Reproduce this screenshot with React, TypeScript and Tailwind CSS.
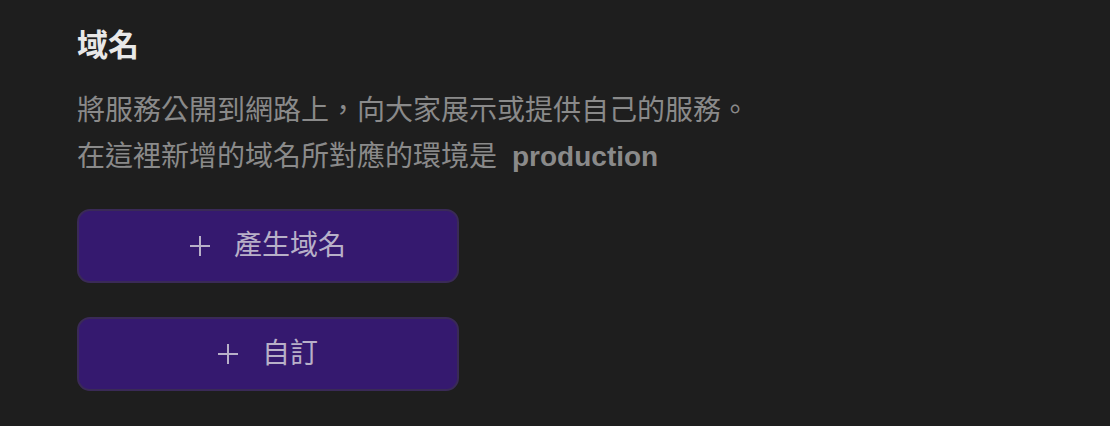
import React from "react";

const Plus = () => (
  <svg width="20" height="20" viewBox="0 0 20 20" fill="none" stroke="currentColor" strokeWidth="2">
    <path d="M10 0V20M0 10H20" />
  </svg>
);

export default function App() {
  const font = { fontFamily: '"Liberation Sans", "Noto Sans CJK TC", sans-serif' };
  return (
    <div className="min-h-[426px] w-full bg-[#1e1e1e] pl-[77px] pt-[24px]" style={font}>
      <h2 className="text-[31px] font-bold leading-[44px] text-[#e8e8e8]">域名</h2>
      <div className="mt-[20px] text-[28px] leading-[46px] text-[#8a8a8a]">
        <p>將服務公開到網路上，向大家展示或提供自己的服務。</p>
        <p>
          在這裡新增的域名所對應的環境是<span className="ml-[15px] font-bold">production</span>
        </p>
      </div>
      <div className="mt-[29px] flex flex-col gap-[34px]">
        <button className="flex h-[74px] w-[382px] items-center justify-center gap-[24px] rounded-[13px] border-2 border-[#3a2a57] bg-[#35196f] text-[28px] text-[#b8b0c8]">
          <Plus />
          <span>產生域名</span>
        </button>
        <button className="flex h-[74px] w-[382px] items-center justify-center gap-[24px] rounded-[13px] border-2 border-[#3a2a57] bg-[#35196f] text-[28px] text-[#b8b0c8]">
          <Plus />
          <span>自訂</span>
        </button>
      </div>
    </div>
  );
}
